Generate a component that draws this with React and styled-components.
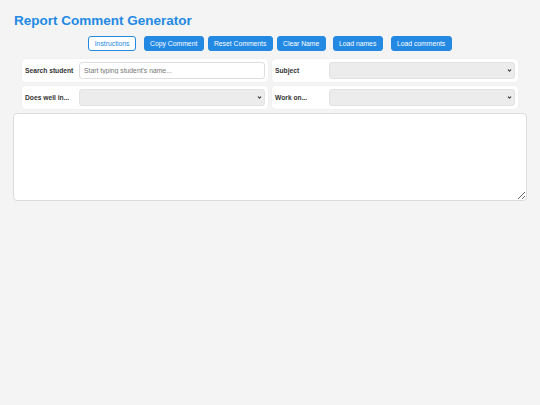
import styled, { createGlobalStyle } from 'styled-components';
import { ChevronDown } from 'lucide-react';

const GlobalStyle = createGlobalStyle`
  html, body {
    margin: 0;
    padding: 0;
    background: #f4f4f4;
    font-family: 'Liberation Sans', Arial, sans-serif;
  }
`;

const BLUE = '#2389e3';

const Page = styled.div`
  min-height: 100vh;
  box-sizing: border-box;
  padding: 13px 13px;
`;

const Title = styled.h1`
  margin: 0 0 0 1px;
  font-size: 13.5px;
  line-height: 16px;
  font-weight: bold;
  color: ${BLUE};
`;

const Toolbar = styled.div`
  display: flex;
  justify-content: center;
  gap: 4px;
  margin-top: 7px;
`;

const Button = styled.button`
  height: 15px;
  padding: 0 5.3px;
  margin-left: ${(p) => p.$extra || 0}px;
  border-radius: 3px;
  border: 1px solid ${BLUE};
  background: ${(p) => (p.$outline ? '#ffffff' : BLUE)};
  color: ${(p) => (p.$outline ? BLUE : '#ffffff')};
  font-family: 'Liberation Sans', Arial, sans-serif;
  font-size: 6.8px;
  line-height: 13px;
  cursor: pointer;
`;

const Controls = styled.div`
  display: grid;
  grid-template-columns: 1fr 1fr;
  gap: 4px;
  margin: 8px 9px 0;
`;

const Card = styled.div`
  display: flex;
  align-items: center;
  background: #ffffff;
  border-radius: 4px;
  padding: 3px;
  box-shadow: 0 0 2px rgba(0, 0, 0, 0.05);
`;

const Label = styled.label`
  width: 54px;
  flex-shrink: 0;
  font-size: 6.7px;
  font-weight: bold;
  color: #333333;
`;

const TextInput = styled.input`
  flex: 1;
  min-width: 0;
  height: 17px;
  box-sizing: border-box;
  border: 1px solid #dedede;
  border-radius: 3px;
  padding: 0 4px;
  font-family: 'Liberation Sans', Arial, sans-serif;
  font-size: 6.8px;
  color: #333333;
  background: #ffffff;
  outline: none;

  &::placeholder {
    color: #777777;
  }
`;

const SelectWrap = styled.div`
  position: relative;
  flex: 1;
  min-width: 0;
  display: flex;

  svg {
    position: absolute;
    right: 3px;
    top: 6px;
    pointer-events: none;
    color: #333333;
  }
`;

const Select = styled.select`
  appearance: none;
  flex: 1;
  min-width: 0;
  height: 17px;
  box-sizing: border-box;
  border: 1px solid #e2e2e2;
  border-radius: 3px;
  background: #ececec;
  font-family: 'Liberation Sans', Arial, sans-serif;
  font-size: 6.8px;
  outline: none;
`;

const CommentBox = styled.textarea`
  display: block;
  width: 100%;
  height: 88px;
  box-sizing: border-box;
  margin-top: 4px;
  border: 1px solid #dcdcdc;
  border-radius: 4px;
  background: #ffffff;
  font-family: 'Liberation Sans', Arial, sans-serif;
  font-size: 8px;
  padding: 4px;
  outline: none;
`;

const Dropdown = () => (
  <SelectWrap>
    <Select>
      <option value=""></option>
    </Select>
    <ChevronDown size={5} strokeWidth={5} />
  </SelectWrap>
);

const App = () => {
  return (
    <Page>
      <GlobalStyle />
      <Title>Report Comment Generator</Title>

      <Toolbar>
        <Button $outline>Instructions</Button>
        <Button $extra={4}>Copy Comment</Button>
        <Button>Reset Comments</Button>
        <Button>Clear Name</Button>
        <Button $extra={3}>Load names</Button>
        <Button $extra={4}>Load comments</Button>
      </Toolbar>

      <Controls>
        <Card>
          <Label>Search student</Label>
          <TextInput placeholder="Start typing student's name..." />
        </Card>
        <Card>
          <Label>Subject</Label>
          <Dropdown />
        </Card>
        <Card>
          <Label>Does well in...</Label>
          <Dropdown />
        </Card>
        <Card>
          <Label>Work on...</Label>
          <Dropdown />
        </Card>
      </Controls>

      <CommentBox />
    </Page>
  );
};

export default App;
